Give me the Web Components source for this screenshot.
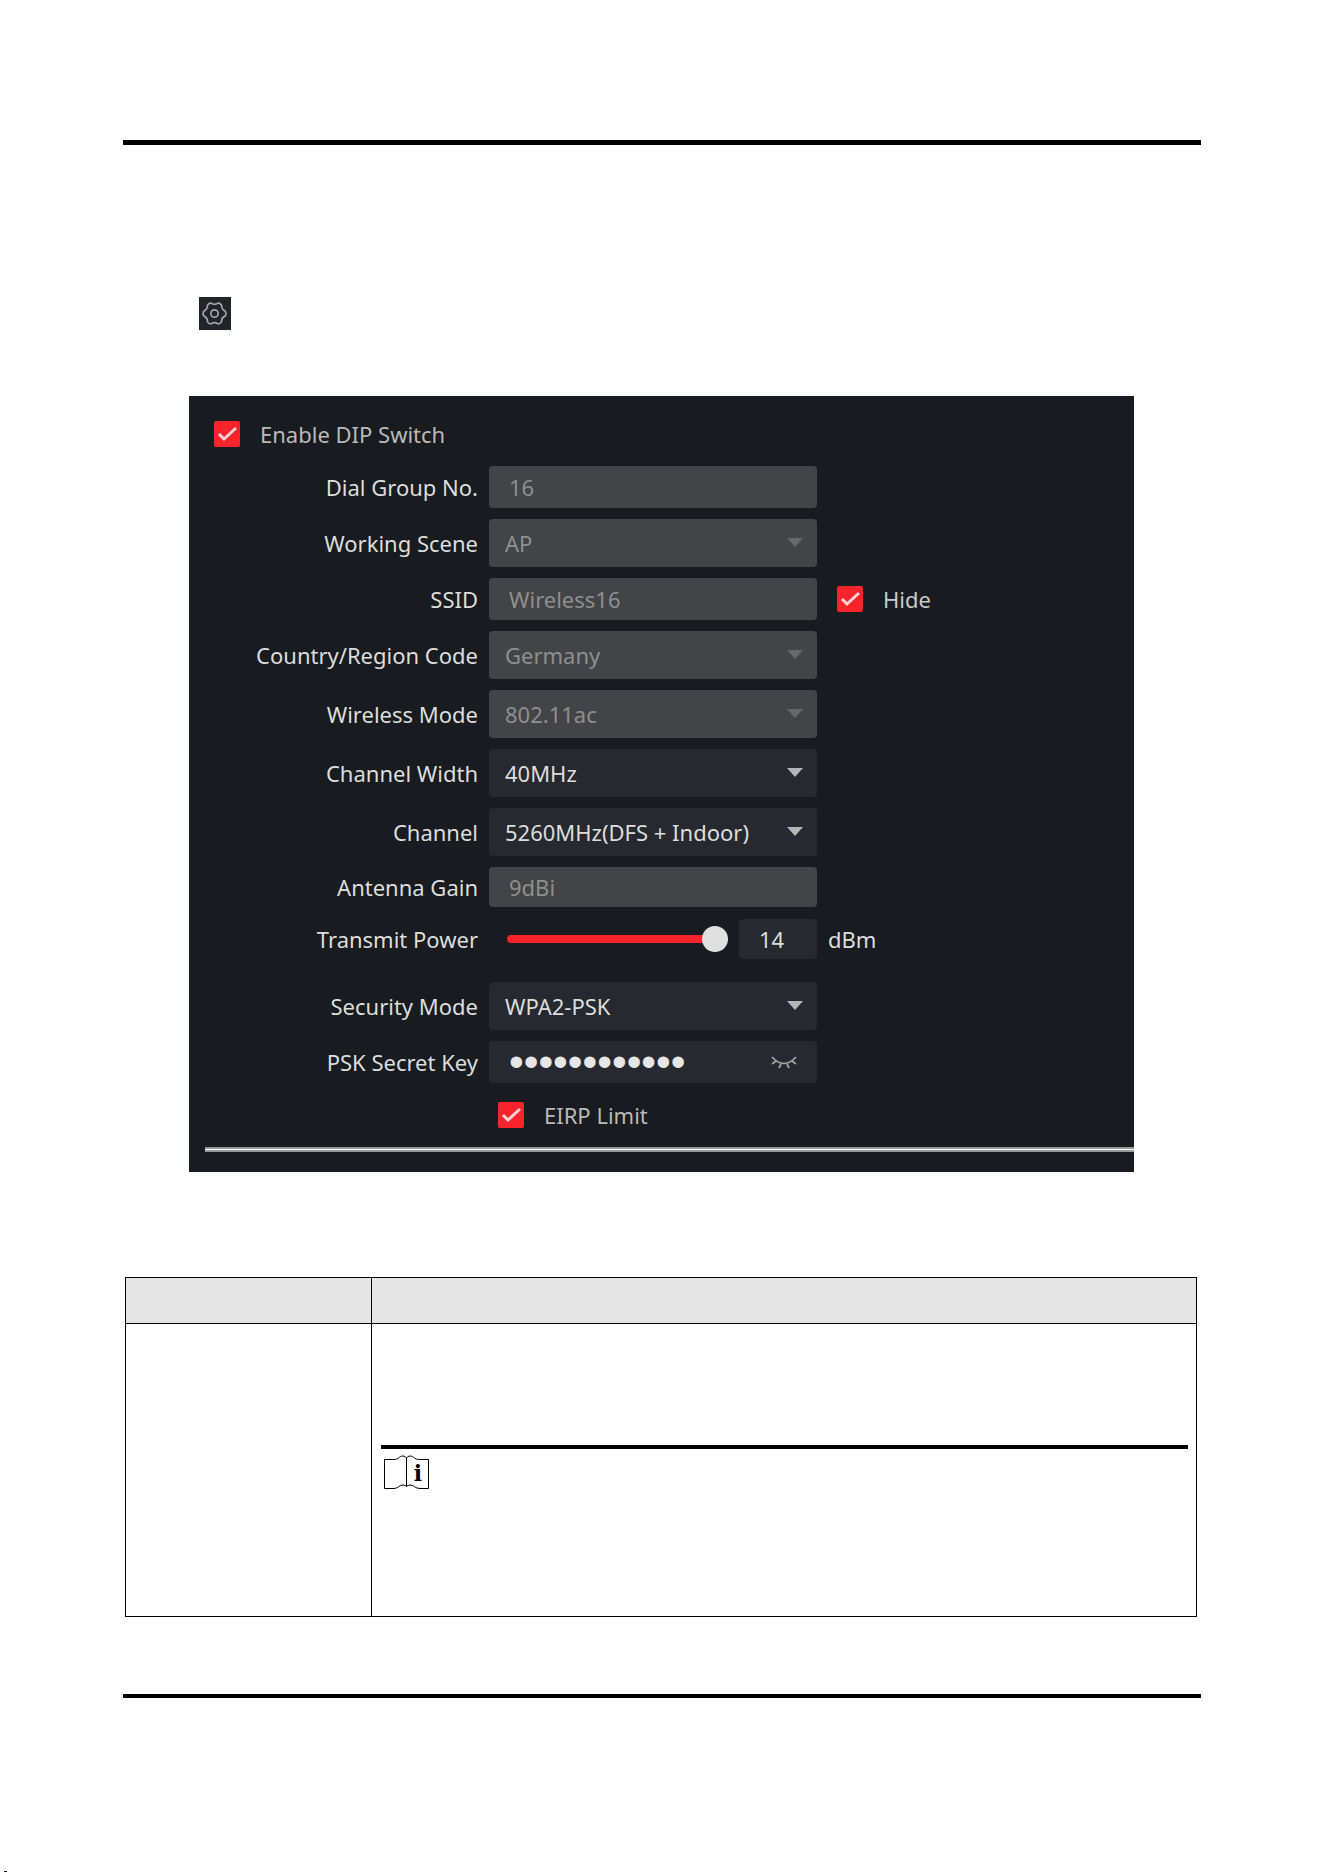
<!DOCTYPE html>
<html lang="en">
<head>
<meta charset="utf-8">
<title>Wireless settings</title>
<style>
  body {
    margin: 0;
    background: #fff;
    font-family: "Noto Sans", "Open Sans", sans-serif;
  }
</style>
</head>
<body>
<manual-page>
  <gear-button></gear-button>
  <settings-panel>
    <check-option label="Enable DIP Switch" class="head"></check-option>
    <setting-row label="Dial Group No." value="16" disabled></setting-row>
    <setting-row label="Working Scene" type="select" value="AP" disabled></setting-row>
    <setting-row label="SSID" value="Wireless16" disabled>
      <check-option label="Hide"></check-option>
    </setting-row>
    <setting-row label="Country/Region Code" type="select" value="Germany" disabled></setting-row>
    <setting-row label="Wireless Mode" type="select" value="802.11ac" disabled></setting-row>
    <setting-row label="Channel Width" type="select" value="40MHz"></setting-row>
    <setting-row label="Channel" type="select" value="5260MHz(DFS + Indoor)"></setting-row>
    <setting-row label="Antenna Gain" value="9dBi" disabled compact></setting-row>
    <power-row label="Transmit Power" value="14" unit="dBm"></power-row>
    <setting-row label="Security Mode" type="select" value="WPA2-PSK"></setting-row>
    <setting-row label="PSK Secret Key" type="password" value="wireless1234"></setting-row>
    <check-option label="EIRP Limit" class="foot"></check-option>
  </settings-panel>
  <param-table></param-table>
</manual-page>

<script>
class ManualPage extends HTMLElement {
  constructor() {
    super();
    this.attachShadow({ mode: 'open' });
    this.shadowRoot.innerHTML = `
      <style>
        :host {
          display: flex;
          flex-direction: column;
          min-height: 100vh;
          box-sizing: border-box;
          padding-top: 140px;
        }
        main {
          margin: 0 123px;
          border-top: 5px solid #000;
          border-bottom: 4px solid #000;
          padding: 152px 0 77px;
        }
        .mark {
          width: 3px;
          height: 1px;
          margin: auto 0 0 4px;
          background: #000;
        }
      </style>
      <main><slot></slot></main>
      <div class="mark"></div>
    `;
  }
}
customElements.define('manual-page', ManualPage);

class GearButton extends HTMLElement {
  constructor() {
    super();
    this.attachShadow({ mode: 'open' });
    this.shadowRoot.innerHTML = `
      <style>
        :host { display: block; margin-left: 76px; }
        button {
          display: block;
          width: 32px;
          height: 33px;
          padding: 0;
          border: none;
          background: #212429;
          cursor: pointer;
        }
        svg { display: block; }
      </style>
      <button aria-label="Settings">
        <svg width="32" height="33" viewBox="-15.5 -16.5 32 33" fill="none" stroke="#a3a5a7" stroke-width="1.7" stroke-linejoin="round">
          <path d="M-3.4-10.4Q0-7.8 3.4-10.4Q5.6-10.6 7-8.4Q6.8-4.2 10.8-2.4Q12 0 10.8 2.4Q6.8 4.2 7 8.4Q5.6 10.6 3.4 10.4Q0 7.8-3.4 10.4Q-5.6 10.6-7 8.4Q-6.8 4.2-10.8 2.4Q-12 0-10.8-2.4Q-6.8-4.2-7-8.4Q-5.6-10.6-3.4-10.4Z"/>
          <circle r="3.7"/>
        </svg>
      </button>
    `;
  }
}
customElements.define('gear-button', GearButton);

class SettingsPanel extends HTMLElement {
  constructor() {
    super();
    this.attachShadow({ mode: 'open' });
    this.shadowRoot.innerHTML = `
      <style>
        :host {
          display: block;
          margin: 66px 67px 105px 66px;
          padding: 17px 0 20px;
          background: #181b1f;
          color: #dcdddd;
          font-size: 22px;
          line-height: 30px;
        }
        form {
          display: flex;
          flex-direction: column;
          gap: 11px;
        }
        ::slotted(.head) { margin-left: 25px; color: #b9baba; }
        ::slotted(.foot) { margin-left: 309px; color: #b9baba; }
        hr {
          height: 1px;
          margin: 0 0 0 16px;
          border: solid #98999b;
          border-width: 2px 0;
          background: #fff;
        }
      </style>
      <form>
        <slot></slot>
        <hr>
      </form>
    `;
  }
}
customElements.define('settings-panel', SettingsPanel);

class CheckOption extends HTMLElement {
  constructor() {
    super();
    this.attachShadow({ mode: 'open' });
    this.shadowRoot.innerHTML = `
      <style>
        :host { display: flex; align-items: center; height: 42px; }
        label { display: flex; align-items: center; gap: 20px; }
        .box { display: grid; }
        .box > * { grid-area: 1 / 1; }
        input {
          appearance: none;
          width: 26px;
          height: 26px;
          margin: 0;
          border-radius: 2px;
          background: #3a3d42;
        }
        input:checked { background: #f9232c; }
        svg { pointer-events: none; visibility: hidden; }
        input:checked + svg { visibility: visible; }
      </style>
      <label>
        <span class="box">
          <input type="checkbox" checked>
          <svg width="26" height="26" fill="none" stroke="#ffd3d4" stroke-width="3"><path d="M5 13l5 5L22 7"/></svg>
        </span>
        <span>${this.getAttribute('label')}</span>
      </label>
    `;
  }
}
customElements.define('check-option', CheckOption);

// shared by every row with a right-aligned label
const rowStyle = `
  :host {
    display: grid;
    grid-template-columns: 289px 328px 1fr;
    column-gap: 11px;
    align-items: center;
  }
  .name { text-align: right; }
  input, select {
    box-sizing: border-box;
    width: 100%;
    margin: 0;
    border: none;
    border-radius: 4px;
    background: #26292f;
    color: #dcdddd;
    font: inherit;
    opacity: 1;
  }
  input { height: 42px; padding: 0 20px; }
`;

class SettingRow extends HTMLElement {
  constructor() {
    super();
    this.attachShadow({ mode: 'open' });
    const type = this.getAttribute('type') || 'text';
    const value = this.getAttribute('value');
    const disabled = this.hasAttribute('disabled') ? 'disabled' : '';

    let control = `<input id="control" type="${type}" value="${value}" ${disabled}>`;
    if (type === 'select') {
      control = `
        <select id="control" ${disabled}><option>${value}</option></select>
        <svg class="caret" width="16" height="10"><path d="M0 0h16L8 9z"/></svg>
      `;
    }
    if (type === 'password') {
      control += `
        <button type="button" aria-label="Show key">
          <svg width="26" height="14" fill="none" stroke="#a0a2a4" stroke-width="1.7">
            <path d="M1 2Q13 15 25 2M5 6L1 9M10 9L8 13M16 9l2 4M21 6l4 3"/>
          </svg>
        </button>
      `;
    }

    this.shadowRoot.innerHTML = `
      <style>
        ${rowStyle}
        .field { display: grid; align-items: center; }
        .field > * { grid-area: 1 / 1; }
        select {
          appearance: none;
          height: 48px;
          padding: 0 36px 0 16px;
        }
        :host([compact]) input { height: 40px; }
        input:disabled, select:disabled { background: #424448; color: #8d908f; }
        input[type=password] { font-family: "Liberation Sans", sans-serif; font-size: 42px; color: #e6e6e6; }
        .caret {
          justify-self: end;
          margin-right: 14px;
          fill: #b4b5b6;
          pointer-events: none;
        }
        select:disabled + .caret { fill: #66686a; }
        button {
          justify-self: end;
          margin-right: 20px;
          padding: 0;
          border: none;
          background: none;
          cursor: pointer;
        }
        button svg { display: block; }
        ::slotted(*) { margin-left: 9px; color: #c9caca; }
      </style>
      <label class="name" for="control">${this.getAttribute('label')}</label>
      <div class="field">${control}</div>
      <slot></slot>
    `;
  }
}
customElements.define('setting-row', SettingRow);

class PowerRow extends HTMLElement {
  constructor() {
    super();
    this.attachShadow({ mode: 'open' });
    const value = this.getAttribute('value');
    this.shadowRoot.innerHTML = `
      <style>
        ${rowStyle}
        :host { height: 42px; margin-bottom: 11px; }
        .field { display: flex; align-items: center; gap: 11px; }
        .level { width: 78px; height: 40px; }
        .range {
          appearance: none;
          flex: 1;
          min-width: 0;
          height: 26px;
          margin-left: 18px;
          padding: 0;
          background: none;
        }
        .range::-webkit-slider-runnable-track {
          height: 8px;
          border-radius: 4px;
          background: #f9232c;
        }
        .range::-webkit-slider-thumb {
          appearance: none;
          width: 26px;
          height: 26px;
          margin-top: -9px;
          border-radius: 50%;
          background: #e0e0e0;
        }
      </style>
      <label class="name" for="range">${this.getAttribute('label')}</label>
      <div class="field">
        <input id="range" class="range" type="range" min="0" max="${value}" value="${value}">
        <input class="level" type="text" value="${value}" aria-label="${this.getAttribute('label')}">
      </div>
      <span>${this.getAttribute('unit')}</span>
    `;
    const range = this.shadowRoot.querySelector('.range');
    const level = this.shadowRoot.querySelector('.level');
    range.addEventListener('input', () => {
      level.value = range.value;
    });
  }
}
customElements.define('power-row', PowerRow);

class ParamTable extends HTMLElement {
  constructor() {
    super();
    this.attachShadow({ mode: 'open' });
    this.shadowRoot.innerHTML = `
      <style>
        :host { display: block; margin: 0 4px 0 2px; }
        table {
          width: 100%;
          table-layout: fixed;
          border-collapse: separate;
          border-spacing: 0;
          border: solid #000;
          border-width: 1px 0 0 1px;
        }
        th, td {
          padding: 0;
          border: solid #000;
          border-width: 0 1px 1px 0;
          vertical-align: top;
        }
        th { height: 45px; background: #e5e5e5; }
        th:first-child { width: 245px; }
        td:last-child { padding: 121px 8px 127px 9px; }
        hr {
          height: 4px;
          margin: 0 0 6px;
          border: none;
          background: #000;
        }
        svg { display: block; margin-left: 3px; }
      </style>
      <table>
        <thead><tr><th></th><th></th></tr></thead>
        <tbody>
          <tr>
            <td></td>
            <td>
              <hr>
              <svg width="46" height="34" fill="none" stroke="#000" role="img" aria-label="Note">
                <path d="M.5 4.5H10C15 4.5 15 1 19 1Q21.500 1 22.500 3Q23.500 1 26 1C30 1 30 4.5 35 4.5H44.500V33.500H36C31 33.500 30 30 26 30Q23.500 30 22.500 31.500Q21.500 30 19 30C15 30 14 33.500 10 33.500H.5ZM22.500 3V32"/>
                <text x="34" y="26" text-anchor="middle" font-family="DejaVu Serif" font-weight="bold" font-size="22" fill="#000" stroke="none">i</text>
              </svg>
            </td>
          </tr>
        </tbody>
      </table>
    `;
  }
}
customElements.define('param-table', ParamTable);
</script>
</body>
</html>
